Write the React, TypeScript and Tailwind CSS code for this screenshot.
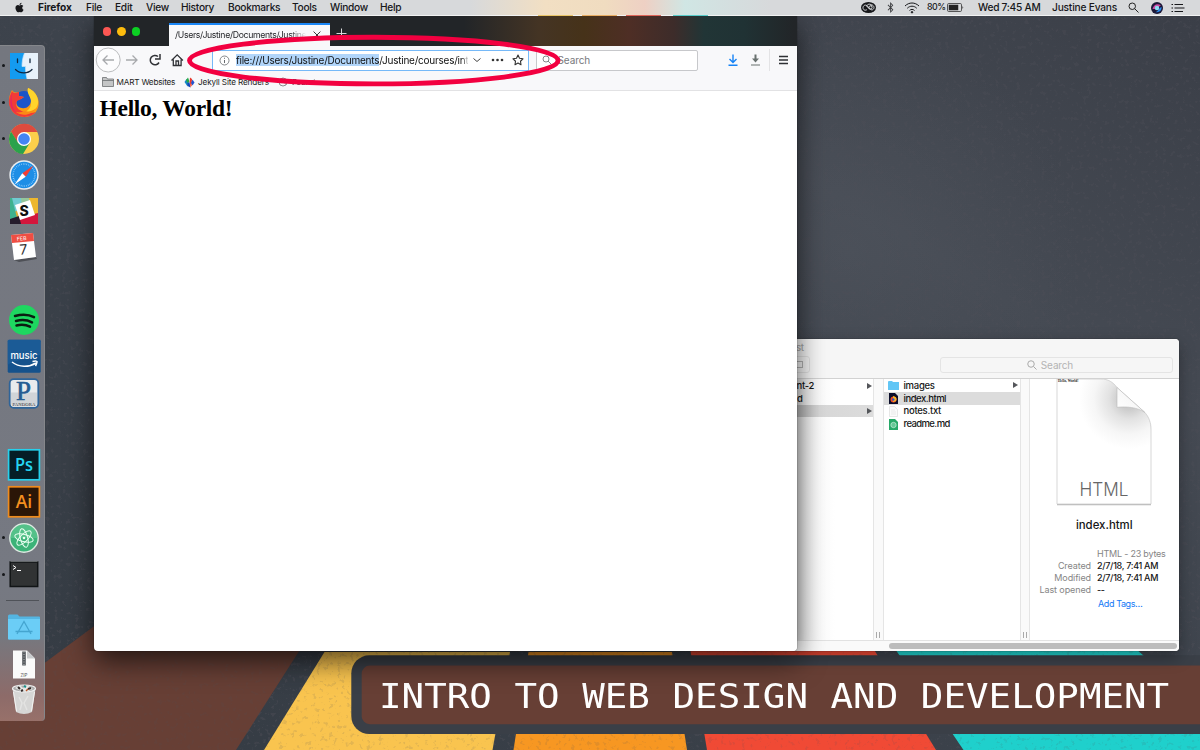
import React from "react";
import { FaApple, FaBluetoothB } from "react-icons/fa";

const menus: [string, string][] = [
  ["File", "w-[29px]"],
  ["Edit", "w-[31px]"],
  ["View", "w-[35px]"],
  ["History", "w-[47px]"],
  ["Bookmarks", "w-[64px]"],
  ["Tools", "w-[38px]"],
  ["Window", "w-[50px]"],
  ["Help", "w-[30px]"],
];

function Wallpaper() {
  return (
    <svg className="absolute inset-0" width="1200" height="750" viewBox="0 0 1200 750">
      <defs>
        <linearGradient id="slate" x1="0" y1="1" x2="1" y2="0">
          <stop offset="0" stopColor="#343b43" />
          <stop offset="0.5" stopColor="#3d434c" />
          <stop offset="0.72" stopColor="#454a53" />
          <stop offset="1" stopColor="#3a3e47" />
        </linearGradient>
        <radialGradient id="glow" gradientUnits="userSpaceOnUse" cx="850" cy="250" r="230">
          <stop offset="0" stopColor="#5b6069" stopOpacity="0.3" />
          <stop offset="1" stopColor="#5b6069" stopOpacity="0" />
        </radialGradient>
        <filter id="specks" x="0" y="0" width="100%" height="100%">
          <feTurbulence type="fractalNoise" baseFrequency="0.24" numOctaves="3" seed="8" />
          <feColorMatrix values="0 0 0 0 0.08  0 0 0 0 0.08  0 0 0 0 0.1  9 0 0 0 -5.4" />
        </filter>
      </defs>
      <rect width="1200" height="750" fill="url(#slate)" />
      <rect width="1200" height="750" fill="url(#glow)" />
      <rect width="1200" height="750" filter="url(#specks)" opacity="0.32" />
      <polygon points="0,696 93,627 330,456 420,456 298.5,652 236,750 0,750" fill="#673f35" />
      <polygon points="324.5,652 264,750 492.5,750 510,652" fill="#f9c44f" />
      <polygon points="528.5,652 513.5,750 687,750 672,652" fill="#f79722" />
      <polygon points="690,648 707,750 936,750 873,648" fill="#f04a35" />
      <polygon points="894.5,648 963.5,750 1200,750 1200,706 1135,648" fill="#1fd0cc" />
      <rect y="600" width="1200" height="150" filter="url(#specks)" opacity="0.12" />
      <rect x="351.3" y="655.3" width="900" height="78.7" rx="18" fill="#3a3f47" />
      <rect x="361.7" y="665.6" width="900" height="58.6" rx="8" fill="#673f35" />
    </svg>
  );
}

function MenuBar() {
  return (
    <header className="absolute inset-x-0 top-0 flex h-[16px] items-center border-b border-[#f2f3f3] bg-[#d7d9db] bg-[linear-gradient(90deg,#d7d9db_0,#d7d9db_470px,#f2dfc3_545px,#f0dcc0_605px,#eed0c4_645px,#d0e6e4_685px,#d3e0e0_720px,#d7d9db_770px)] text-[10.2px] leading-none tracking-[-0.28px] whitespace-nowrap text-[#16171a]">
      <FaApple className="ml-[14px] h-[12px] w-[11px] pb-[1px]" />
      <span className="ml-[13px] w-[48px] font-bold tracking-[-0.1px]">Firefox</span>
      {menus.map(([m, w]) => (
        <span key={m} className={`${w} font-medium`}>{m}</span>
      ))}
      <div className="ml-auto flex items-center font-medium">
        <svg width="15" height="11" viewBox="0 0 30 22" className="mr-[10px]">
          <ellipse cx="15" cy="11" rx="15" ry="11" fill="#16171a" />
          <g fill="none" stroke="#dcdee0" strokeWidth="1.9">
            <path d="M12 15c-3 3-8 1-8-3.500s5-7 8-4l7 7c3 3 7 0 7-3.500s-4-7-8-4.500" />
            <path d="M18 15l-7-7c4-6 10-4 11 1" />
            <circle cx="19" cy="11" r="3.200" />
          </g>
        </svg>
        <FaBluetoothB className="mr-[9px] h-[11px] w-[9px] opacity-80" />
        <svg width="16" height="12" viewBox="0 0 32 24" className="mr-[7px]" fill="none" stroke="#16171a" strokeWidth="2">
          <path d="M2 8c8-8 20-8 28 0M6.500 12.500c5.500-5.500 13.500-5.500 19 0M11 17c3-3 7-3 10 0" />
          <circle cx="16" cy="20.500" r="1.500" fill="#16171a" />
        </svg>
        <span className="w-[20px] text-[8.800px] tracking-[-0.5px]">80%</span>
        <svg width="17" height="9" viewBox="0 0 34 18" className="mr-[14px]">
          <rect x="1" y="1" width="28" height="16" rx="2.500" fill="none" stroke="#333" strokeWidth="1.600" />
          <rect x="3.500" y="3.500" width="19" height="11" fill="#222" />
          <path d="M31 6v6q3-3 0-6" fill="#222" />
        </svg>
        <span className="w-[74px]">Wed 7:45 AM</span>
        <span className="w-[76px] tracking-[-0.2px]">Justine Evans</span>
        <svg width="11" height="11" viewBox="0 0 22 22" className="mr-[12px]" fill="none" stroke="#222" strokeWidth="2">
          <circle cx="8.500" cy="8.500" r="6.500" /><path d="M13 13l8 8" />
        </svg>
        <svg width="12" height="12" viewBox="0 0 24 24" className="mr-[8px]">
          <circle cx="12" cy="12" r="12" fill="#1b1838" />
          <path d="M3 14C5 4 14 2 20 7c-5 1-4 8-17 7" fill="#cf48a5" />
          <path d="M21 10c1 7-5 12-12 10 6-1 6-8 12-10" fill="#278bf0" />
          <circle cx="12" cy="12" r="4.500" fill="#8bdcf4" />
        </svg>
        <svg width="14" height="10" viewBox="0 0 28 20" className="mr-[15px]" stroke="#16171a" strokeWidth="2.400">
          <path d="M1 3h3M7 3h17M1 10h3M7 10h20M1 17h3M7 17h17" />
        </svg>
      </div>
    </header>
  );
}

const dockIcons: React.ReactNode[] = [
  <g key="finder">
    <rect x="1" y="2" width="28" height="26" fill="#e8f2fb" />
    <path d="M1 2h14.500c-2 5-2.500 9-2.500 13.500h3.500c0 5 .5 8 1.500 12.500H1z" fill="#149bf0" />
    <path d="M15.500 2c-2 5-2.500 9-2.500 13.500h3.500c0 5 .5 8 1.500 12.500" fill="none" stroke="#c7e2f5" strokeWidth=".7" />
    <path d="M8.500 8v3.500M21 8v3.500M6.500 18.500c4.500 4.500 12.500 4.500 16.500 0" fill="none" stroke="#12273d" strokeWidth="1.300" strokeLinecap="round" />
  </g>,
  <g key="firefox">
    <circle cx="15" cy="16" r="12" fill="#1c55c8" />
    <path d="M19 1c-1 5 3 7 3 12 0 6-5 9-9 8-4 0-7-4-5-8l4-1 3-2-5-1 0-4C7 6 5 6 3 3 0 8-1 15 2 22c4 8 16 11 24 4 7-8 4-20-7-25" fill="#fb9b12" />
    <path d="M3 4C-1 12-1 17 2 22c5 10 19 10 25 3-6 2-12 1-16-2-3-1-5-6-3-9l4-2 3-2-5-1V5C7 6 5 7 3 4" fill="#f23c37" />
    <path d="M19 1c-2 6 4 9 3 15 0 5-3 8-7 9 10 2 15-5 14-12-1-6-5-10-10-12" fill="#ffd52b" />
    <path d="M3 6C0 14 1 22 7 26c-4-5-5-12-4-20" fill="#e62463" />
    <path d="M7 25c7 5 16 3 20-4-3 3-7 4-11 3-3 1-6 2-9 1" fill="#fb8a16" />
  </g>,
  <g key="chrome">
    <circle cx="15" cy="15" r="15" fill="#fbcf4b" />
    <path d="M2 7.500A15 15 0 0 1 28.500 8H15L9 19z" fill="#dd4b3e" />
    <path d="M2 7.500A15 15 0 0 0 14 30l7-11.500-12 0z" fill="#2ba24c" />
    <circle cx="15" cy="15" r="7" fill="#fff" /><circle cx="15" cy="15" r="5.800" fill="#4285f4" />
  </g>,
  <g key="safari">
    <circle cx="15" cy="15" r="14.700" fill="#e9edf0" /><circle cx="15" cy="15" r="13.200" fill="#1d8ee6" />
    <circle cx="15" cy="15" r="11" fill="none" stroke="#a6d8ff" strokeDasharray=".6 1.200" strokeWidth="1.500" />
    <path d="M24.500 5.500l-7.800 11.200-3.400-3.400z" fill="#f43e34" /><path d="M5.500 24.500l7.800-11.200 3.400 3.400z" fill="#fff" />
  </g>,
  <g key="slack">
    <rect x="1" y="2" width="28" height="26" fill="#dfac38" />
    <path d="M1 2h13l-3 12-10 3z" fill="#71cbd1" /><path d="M1 2l2 0 6 24H1z" fill="#3fb28e" />
    <path d="M19 2h10v15l-5 2z" fill="#edb72e" /><path d="M12 2h8l1 5-8 3z" fill="#95c69b" />
    <path d="M1 24l28-7v11H1z" fill="#d3163c" /><path d="M1 23l9-3 2 8H1z" fill="#251c2c" />
    <path d="M6 9l15-5 5 15-15 5z" fill="#fff" />
    <text x="15" y="20" textAnchor="middle" fontSize="14" fontWeight="800" fill="#111">S</text>
  </g>,
  <g key="calendar">
    <path d="M5 28l22-3 1 2-18 3z" fill="#4e5056" />
    <path d="M2 3l22-2 3 24-22 3z" fill="#fff" /><path d="M2 3l22-2 1 8-22 2z" fill="#ee4e43" />
    <text x="12.800" y="8.300" textAnchor="middle" fontSize="5.200" fill="#fff" transform="rotate(-5 13 8)">FEB</text>
    <text x="14.500" y="22.500" textAnchor="middle" fontSize="14" fill="#333" transform="rotate(-5 14 18)">7</text>
  </g>,
  null,
  <g key="spotify">
    <circle cx="15" cy="15" r="15" fill="#1ed760" />
    <path d="M6 11c7-2 14-1.500 19 1.200M7 16c6-1.600 11.500-1 16 1.400M7.500 20.500c5-1.200 9.500-.8 13.500 1.200" fill="none" stroke="#0b1c11" strokeWidth="2.500" strokeLinecap="round" />
  </g>,
  <g key="music">
    <rect x="-1.300" y="-1.300" width="33" height="33" rx="1.500" fill="#15528c" />
    <path d="M-1.300 -1.300h33v15c-12 5-24 4-33 10z" fill="#20639e" opacity=".55" />
    <text x="15" y="18" textAnchor="middle" fontSize="9.500" fontWeight="500" fill="#fff">music</text>
    <path d="M3 21c7 5.500 17 5.500 24 1M23.500 20.500q5-1 4.500.5-.3 2-1.500 4" fill="none" stroke="#fff" strokeWidth="1.500" />
  </g>,
  <g key="pandora">
    <rect x=".7" y="1.200" width="28.600" height="28.600" rx="4" fill="#e9ebed" stroke="#2e6499" strokeWidth="1.800" />
    <path d="M2 14.500h26v10q0 4-4 4H6q-4 0-4-4z" fill="#d0d4d8" />
    <text x="14.500" y="21.500" textAnchor="middle" fontFamily="Liberation Serif, serif" fontWeight="400" fontSize="27" fill="#245d93" stroke="#245d93" strokeWidth=".6">P</text>
    <text x="15" y="27.500" textAnchor="middle" fontFamily="Liberation Serif, serif" fontSize="4.700" textLength="23" fill="#333">PANDORA</text>
  </g>,
  null,
  <g key="ps">
    <rect x="-.4" y="-.2" width="30.800" height="30" fill="#051e26" stroke="#27d0ec" strokeWidth="1.700" />
    <text x="15" y="20.500" textAnchor="middle" fontFamily="Open Sans, sans-serif" fontWeight="600" fontSize="18" textLength="18" lengthAdjust="spacingAndGlyphs" fill="#25d5f2">Ps</text>
  </g>,
  <g key="ai">
    <rect x="-.4" y="-.2" width="30.800" height="30" fill="#2b1607" stroke="#ef8b1c" strokeWidth="1.700" />
    <text x="15" y="20.500" textAnchor="middle" fontFamily="Open Sans, sans-serif" fontWeight="600" fontSize="18" textLength="16.500" lengthAdjust="spacingAndGlyphs" fill="#f4901f">Ai</text>
  </g>,
  <g key="atom">
    <circle cx="15" cy="15" r="14.200" fill="#3bb378" stroke="#dce9e1" strokeWidth="1.400" />
    <path d="M1.500 15a13.500 13.500 0 0 1 27 0z" fill="#66c994" opacity=".6" />
    <g fill="none" stroke="#e9fff1" strokeWidth="1">
      <ellipse cx="15" cy="15" rx="9.500" ry="3.700" transform="rotate(15 15 15)" />
      <ellipse cx="15" cy="15" rx="9.500" ry="3.700" transform="rotate(75 15 15)" />
      <ellipse cx="15" cy="15" rx="9.500" ry="3.700" transform="rotate(135 15 15)" />
    </g>
    <circle cx="15" cy="15" r="1.300" fill="#e9fff1" />
  </g>,
  <g key="terminal">
    <rect x="1.200" y="3" width="27.500" height="24.500" fill="#313334" stroke="#111416" strokeWidth="1.500" />
    <path d="M1.500 2.500h27" stroke="#8d9092" strokeWidth=".6" />
    <path d="M4 6.500l3 2-3 2M8 11.500h4" fill="none" stroke="#fff" strokeWidth="1" />
  </g>,
];

const placeIcons: React.ReactNode[] = [
  <g key="folder">
    <path d="M-1 4q0-1.500 1.500-1.500h8l2 2H30q1 0 1 1v21q0 1-1 1H0q-1 0-1-1z" fill="#54b5e1" />
    <path d="M-1 7h32v19.500q0 1-1 1H0q-1 0-1-1z" fill="#6bcdf6" />
    <path d="M8 22l7-12.500L22 22M6.500 19.500h17" fill="none" stroke="#44a5d0" strokeWidth="1.300" />
  </g>,
  <g key="zip">
    <path d="M4 1.500h14l8 8v20H4z" fill="#fafafa" /><path d="M18 1.500v8h8z" fill="#c9cbcd" />
    <path d="M15 2.500v14" stroke="#55595d" strokeWidth="3.600" /><path d="M15 2.500v14" stroke="#b5b8ba" strokeDasharray="1 1.500" />
    <text x="15" y="28" textAnchor="middle" fontSize="4.500" fill="#555">ZIP</text>
  </g>,
  <g key="trash">
    <path d="M3.500 3.500h23l-3.500 23.500q-8 4-16 0z" fill="#d6d6d5" />
    <path d="M10 12l3 6-2 7M19 11l-4 7 3 7" fill="none" stroke="#e6e6e5" strokeWidth="1.500" opacity=".8" />
    <path d="M4.500 7l3 19M25.500 7l-3 19" stroke="#f3f3f2" strokeWidth="1" />
    <ellipse cx="15" cy="3.500" rx="11.500" ry="3.500" fill="#aaa" stroke="#eee" strokeWidth="1.200" />
    <path d="M6 3l5-3 3 3 4-3 6 4-7 3-5-1z" fill="#e5e7e5" />
    <path d="M9 2l2 2M19 4l3-1M12 6l2-1" stroke="#332b2b" strokeWidth="2" /><path d="M15 1l2 1" stroke="#198f8a" strokeWidth="2" /><path d="M17 6l2-2" stroke="#bd562c" strokeWidth="1.500" />
  </g>,
];

function DockCell({ icon, running }: { icon: React.ReactNode; running?: boolean }) {
  return (
    <div className="flex h-[36.3px] items-center">
      <span className={`ml-[1.500px] h-[3px] w-[3px] rounded-full ${running ? "bg-[#15171a]" : "bg-transparent"}`} />
      <svg width="30" height="30" viewBox="0 0 30 30" className="ml-[4.500px] overflow-visible">{icon}</svg>
    </div>
  );
}

function Dock() {
  const running = [0, 1, 2, 13, 14];
  return (
    <nav className="absolute top-[45px] left-0 flex h-[676px] w-[44.500px] flex-col rounded-r-[4px] border-t border-r border-[#85878b] bg-[linear-gradient(180deg,#74777f_0,#767982_540px,#76787f_590px,#8d6b69_650px,#98716a_676px)] pt-[1.800px]">
      {dockIcons.map((icon, i) => <DockCell key={i} icon={icon} running={running.includes(i)} />)}
      <div className="flex h-[17px] items-center"><span className="ml-[6px] h-px w-[33px] bg-[#4f5258]" /></div>
      {placeIcons.map((icon, i) => <DockCell key={i} icon={icon} />)}
    </nav>
  );
}

function Browser() {
  return (
    <section className="absolute top-[16px] left-[93.500px] flex h-[635px] w-[703.500px] flex-col overflow-hidden rounded-b-[4px] bg-white">
      <div className="flex h-[30px] shrink-0 bg-[#23262a] bg-[linear-gradient(90deg,#222528_0,#222528_370px,#443424_445px,#463219_490px,#4e2e25_535px,#3d2c2a_580px,#213536_610px,#203234_650px,#222528_700px)]">
        <div className="mt-[11px] ml-[9px] flex gap-[6px]">
          <i className="h-[8.500px] w-[8.500px] rounded-full bg-[#fc5753]" />
          <i className="h-[8.500px] w-[8.500px] rounded-full bg-[#fdbc0d]" />
          <i className="h-[8.500px] w-[8.500px] rounded-full bg-[#0cd023]" />
        </div>
        <div className="mt-[7px] ml-[29px] flex w-[160.500px] shrink-0 flex-col bg-[#f8f8fa]">
          <span className="h-[1.500px] shrink-0 bg-[#1a86f5]" />
          <div className="flex flex-1 items-center pl-[6px]">
            <span className="w-[132px] shrink-0 overflow-hidden text-[8.700px] tracking-[-0.33px] whitespace-nowrap text-[#25262a] [mask-image:linear-gradient(90deg,#000_115px,transparent_131px)]">/Users/Justine/Documents/Justine/</span>
            <svg width="8" height="8" viewBox="0 0 14 14" className="ml-[6px] shrink-0" stroke="#333" strokeWidth="1.700"><path d="M1 1l12 12M13 1L1 13" /></svg>
          </div>
        </div>
        <svg width="11" height="11" viewBox="0 0 22 22" className="mt-[12px] ml-[6px]" stroke="#d7d8da" strokeWidth="2"><path d="M11 1v20M1 11h20" /></svg>
      </div>
      <div className="flex h-[28px] shrink-0 items-center bg-[#f8f8fa]">
        <svg width="91" height="28" viewBox="0 0 91 28" fill="none" stroke="#303236" strokeWidth="1.300">
          <g stroke="#a7a9ac">
            <circle cx="14.200" cy="14" r="12" fill="#fcfcfd" stroke="#bbbcbe" strokeWidth="1" />
            <path d="M20 14H9M13.500 9.500L9 14l4.500 4.500M32 14h11M38.500 9.500L43 14l-4.500 4.500" />
          </g>
          <path d="M64 10.500a4.700 4.700 0 1 0 1 6" strokeWidth="1.500" /><path d="M66 8v5h-5" strokeWidth="1.500" />
          <path d="M77.500 14.500l5.700-5.700 5.700 5.700M79.300 13.500v6h7.800v-6" /><path d="M82 19v-4h2.500v4" />
        </svg>
        <div className="ml-[27.500px] flex h-[21px] w-[316.500px] items-center border border-[#76b9f8] bg-white text-[10px]">
          <svg width="11" height="11" viewBox="0 0 22 22" className="ml-[6px]" fill="none" stroke="#666a6e" strokeWidth="1.600"><circle cx="11" cy="11" r="9" /><path d="M11 10v6M11 5.500v2" strokeWidth="2" /></svg>
          <div className="ml-[6px] w-[232px] overflow-hidden leading-[13px] tracking-[-0.23px] whitespace-nowrap text-[#111] [mask-image:linear-gradient(90deg,#000_226px,transparent_233px)]">
            <span className="bg-[#b1d5fa]">file:///Users/Justine/Documents</span>/Justine/courses/intro
          </div>
          <svg width="8" height="6" viewBox="0 0 16 12" className="ml-[5px]" fill="none" stroke="#444" strokeWidth="2"><path d="M1 3l7 6 7-6" /></svg>
          <svg width="13" height="4" viewBox="0 0 26 8" className="ml-[10px]" fill="#333"><circle cx="4" cy="4" r="2.600" /><circle cx="13" cy="4" r="2.600" /><circle cx="22" cy="4" r="2.600" /></svg>
          <svg width="12" height="12" viewBox="0 0 24 24" className="ml-[8px]" fill="none" stroke="#333" strokeWidth="2.200" strokeLinejoin="round"><path d="M12 2l3 6.500 7 1-5 5 1 7-6-3.500-6 3.500 1-7-5-5 7-1z" /></svg>
        </div>
        <div className="ml-[7px] flex h-[21px] w-[162px] items-center rounded-[2px] border border-[#c7c8cb] bg-white text-[10px] text-[#77797c]">
          <svg width="10" height="10" viewBox="0 0 20 20" className="ml-[5px]" fill="none" stroke="#777a7e" strokeWidth="1.800"><circle cx="8" cy="8" r="6" /><path d="M12 12l6 6" /></svg>
          <span className="ml-[6px] tracking-[-0.1px]">Search</span>
        </div>
        <svg width="10" height="12" viewBox="0 0 20 24" className="ml-[30.500px]" fill="none" stroke="#1683f5" strokeWidth="2.800"><path d="M10 1v16M3 10l7 7 7-7M1 22.500h18" /></svg>
        <svg width="9" height="12" viewBox="0 0 18 24" className="ml-[13px]" fill="none" stroke="#69716f"><path d="M9 1v9" strokeWidth="4" /><path d="M2 9h14l-7 8z" fill="#69716f" stroke="none" /><path d="M0 22h18" strokeWidth="2" /></svg>
        <span className="ml-[9px] h-[22px] w-px bg-[#e3e3e5]" />
        <svg width="9" height="10" viewBox="0 0 18 20" className="ml-[9px]" stroke="#2e3034" strokeWidth="2.700"><path d="M0 3h18M0 10h18M0 17h18" /></svg>
      </div>
      <div className="flex h-[17px] shrink-0 items-center border-b border-[#e2e2e4] bg-[#f8f8fa] text-[8.200px] tracking-[-0.2px] whitespace-nowrap text-[#222]">
        <svg width="12" height="10" viewBox="0 0 24 20" className="ml-[8px]" fill="#c4c5c6" stroke="#66686b" strokeWidth="1.500"><path d="M1 19V1h8l2 3h12v15zM1 7h22" /></svg>
        <span className="ml-[3px] w-[67.500px]">MART Websites</span>
        <svg width="11" height="11" viewBox="0 0 22 22"><path d="M5 4l5 6-3 9-6-9z" fill="#1687c5" /><path d="M8 1l3 8-4 3-3-6z" fill="#26a849" /><path d="M12 1l4 3-1 13-4-5z" fill="#e7382c" /><path d="M17 5l4 6-4 6-3-5z" fill="#2252ce" /><path d="M7 12l4-1 2 10-6-3z" fill="#1445ba" /><path d="M12 13l4 3-3 5z" fill="#ef4932" /></svg>
        <span className="ml-[3px] w-[80px] tracking-[-0.15px]">Jekyll Site Renders</span>
        <svg width="10" height="10" viewBox="0 0 20 20" fill="none" stroke="#7c7e80" strokeWidth="1.800"><circle cx="10" cy="10" r="8" /><path d="M3 7c5 0 4 4 8 4s3 3 5 4M10 2c-2 3 2 4 6 3" /></svg>
        <span className="ml-[4px] [mask-image:linear-gradient(90deg,#000_15px,transparent_30px)]">Found</span>
      </div>
      <h1 className="mt-[3px] ml-[6px] font-['Liberation_Serif',serif] text-[23.500px] leading-[28px] font-bold tracking-[-0.29px] text-black">Hello, World!</h1>
    </section>
  );
}

function Arrow({ className = "" }: { className?: string }) {
  return <svg width="5" height="6" viewBox="0 0 5 6" className={className}><path d="M0 0l5 3-5 3z" fill="#54565a" /></svg>;
}

function Gutter() {
  return (
    <div className="flex w-[10.500px] shrink-0 items-end justify-center gap-[2px] border-x border-[#e5e5e5] bg-[#fafafa] pb-[2px]">
      <i className="h-[6px] w-px bg-[#aaa]" /><i className="h-[6px] w-px bg-[#aaa]" />
    </div>
  );
}

const files = [
  { name: "images", icon: <path d="M0 2q0-1 1-1h3l1 1h6v8H0z" fill="#62c6f5" /> },
  { name: "index.html", icon: <><path d="M1 0h6l3 3v8H1z" fill="#0b0e2b" /><circle cx="5.500" cy="6.500" r="3" fill="#ee4a26" /><path d="M5 3q5 1 3 5l-3 1z" fill="#fbba24" /><circle cx="5.300" cy="6.500" r="1.200" fill="#354fc4" /></> },
  { name: "notes.txt", icon: <><path d="M1.500.5h5l3 3v7h-8z" fill="#fbfbfb" stroke="#ddd" strokeWidth=".7" /><path d="M3 4h4M3 6h5M3 8h5" stroke="#ddd" strokeWidth=".6" /></> },
  { name: "readme.md", icon: <><path d="M1 0h6l3 3v8H1z" fill="#27a968" /><circle cx="5.500" cy="6" r="2.700" fill="#65c896" stroke="#dbf3e6" strokeWidth=".6" /></> },
];

const details = [
  ["", "HTML - 23 bytes"],
  ["Created", "2/7/18, 7:41 AM"],
  ["Modified", "2/7/18, 7:41 AM"],
  ["Last opened", "--"],
];

function FinderWindow() {
  return (
    <section className="absolute top-[339px] left-[790px] flex h-[311.500px] w-[388.500px] flex-col overflow-hidden rounded-[4px] bg-white text-[9.500px] leading-none font-medium tracking-[-0.28px] whitespace-nowrap text-[#161616] shadow-[0_0_1px_#111,0_6px_16px_rgba(0,0,0,.35)]">
      <div className="flex h-[39.500px] shrink-0 flex-col border-b border-[#d2d2d2] bg-[#f6f6f6]">
        <span className="mt-[4px] ml-[6px] h-[10px] text-[#aaa]">st</span>
        <div className="mt-[3px] flex items-center">
          <div className="flex h-[17px] w-[19.500px] items-center justify-end rounded-r-[3px] border border-[#e3e3e3] pr-[6px]"><i className="h-[7px] w-[7px] border border-[#b5b5b5]" /></div>
          <div className="ml-[130.500px] flex h-[16px] w-[233px] items-center justify-center gap-[4px] rounded-[3px] border border-[#e4e4e4] pr-[13px] text-[10px] font-normal tracking-[-0.15px] text-[#b4b4b4]">
            <svg width="10" height="10" viewBox="0 0 20 20" fill="none" stroke="#aaa" strokeWidth="2"><circle cx="8" cy="8" r="6.500" /><path d="M13 13l6 6" /></svg>
            Search
          </div>
        </div>
      </div>
      <div className="flex min-h-0 flex-1">
        <div className="w-[83px] shrink-0 bg-[linear-gradient(90deg,#d8d8d8_5px,#efefef_15px,#fafafa_28px,#fff_45px)]">
          <div className="flex h-[13px] items-center pt-[1px] pl-[6.500px]">nt-2<Arrow className="mr-[1px] ml-auto" /></div>
          <div className="flex h-[13px] items-center pt-[1px] pl-[7px]">d</div>
          <div className="mt-[.5px] flex h-[12px] items-center bg-[linear-gradient(90deg,#b8b8b8_8px,#d7d7d7_30px,#dcdcdc)]"><Arrow className="mr-[1px] ml-auto" /></div>
        </div>
        <Gutter />
        <div className="w-[136px] shrink-0 pt-[.5px]">
          {files.map((f, i) => (
            <div key={f.name} className={`flex h-[12.900px] items-center pl-[4.500px] ${i === 1 ? "bg-[#dcdcdc]" : ""}`}>
              <svg width="11" height="11" viewBox="0 0 11 11">{f.icon}</svg>
              <span className={`ml-[4.500px] ${i === 1 ? "tracking-[-0.48px]" : ""} ${i === 3 ? "tracking-[-0.6px]" : ""}`}>{f.name}</span>
              {i === 0 && <Arrow className="mr-[1.500px] ml-auto" />}
            </div>
          ))}
        </div>
        <Gutter />
        <div className="flex min-w-0 flex-1 flex-col items-center">
          <svg width="98" height="127" viewBox="0 0 98 127" className="shrink-0">
            <defs>
              <radialGradient id="page" gradientUnits="userSpaceOnUse" cx="74" cy="20" r="50">
                <stop offset=".2" stopColor="#cbcbcb" /><stop offset=".4" stopColor="#e2e2e2" /><stop offset=".7" stopColor="#f6f6f6" /><stop offset="1" stopColor="#fff" />
              </radialGradient>
              <linearGradient id="curl" x1="0" y1="1" x2="1" y2="0"><stop offset="0" stopColor="#fff" /><stop offset="1" stopColor="#f0f0f0" /></linearGradient>
            </defs>
            <path d="M2 0h44c7 0 12 3 16 8.500L89.700 33.300C94 38 96 44 96 50v75H2z" fill="#b7b7b7" transform="translate(0 1.200)" />
            <path d="M2 0h44c7 0 12 3 16 8.500L89.700 33.300C94 38 96 44 96 50v75H2z" fill="url(#page)" stroke="#cdcdcd" strokeWidth=".8" />
            <path d="M62 8.500v19.800c10-1 20 0 27.700 5z" fill="url(#curl)" stroke="#b9b9b9" strokeWidth=".6" />
            <text x="3" y="3" fontFamily="Liberation Serif, serif" fontWeight="700" fontSize="3.500" letterSpacing="0" fill="#222">Hello, World!</text>
            <text x="49" y="117" textAnchor="middle" fontSize="18" fontWeight="300" letterSpacing="0" textLength="49" lengthAdjust="spacingAndGlyphs" fill="#666">HTML</text>
          </svg>
          <div className="mt-[14px] text-[11.400px] tracking-normal">index.html</div>
          <dl className="mt-[17px] grid w-full grid-cols-[61px_1fr] gap-x-[6px] text-[9px] tracking-[-0.1px]">
            {details.map(([k, v], i) => (
              <React.Fragment key={i}>
                <dt className="h-[12.200px] text-right leading-[12.200px] font-normal text-[#858585]">{k}</dt>
                <dd className={`h-[12.200px] leading-[12.200px] ${i === 0 ? "font-normal tracking-[-0.22px] text-[#858585]" : "tracking-[-0.3px]"}`}>{v}</dd>
              </React.Fragment>
            ))}
            <dt /><dd className="pl-[1px] leading-[13px] font-normal tracking-[-0.4px] text-[#1579f6]">Add Tags…</dd>
          </dl>
        </div>
      </div>
      <div className="flex h-[10.500px] shrink-0 items-center justify-end border-t border-[#e2e2e2] bg-[#fafafa] pr-[2px]"><span className="h-[6px] w-[287.500px] rounded-full bg-[#bcbcbc]" /></div>
    </section>
  );
}

export default function App() {
  return (
    <main className="relative h-[750px] w-[1200px] overflow-hidden bg-[#3b4048] font-['Inter','Liberation_Sans',sans-serif]">
      <Wallpaper />
      <div className="absolute top-[673px] left-[379px] origin-left scale-y-[0.880] font-['DejaVu_Sans_Mono',monospace] text-[37.500px] leading-[48px] whitespace-nowrap text-white">INTRO TO WEB DESIGN AND DEVELOPMENT</div>
      <FinderWindow />
      <div className="absolute top-[16px] left-[93.500px] h-[635px] w-[703.500px] rounded-b-[4px] shadow-[0_0_1px_#000,0_10px_28px_rgba(0,0,0,.65)]" />
      <Browser />
      <Dock />
      <MenuBar />
      <svg className="pointer-events-none absolute top-0 left-0" width="1200" height="100" viewBox="0 0 1200 100">
        <path d="M538 15.500h35" stroke="#eac566" /><path d="M582 15.500h35" stroke="#e9ad61" /><path d="M626 15.500h35" stroke="#df6559" /><path d="M673 15.500h35" stroke="#58ccca" />
        <ellipse cx="373.800" cy="60.600" rx="184.300" ry="23.300" fill="none" stroke="#f20040" strokeWidth="4.900" />
      </svg>
    </main>
  );
}
